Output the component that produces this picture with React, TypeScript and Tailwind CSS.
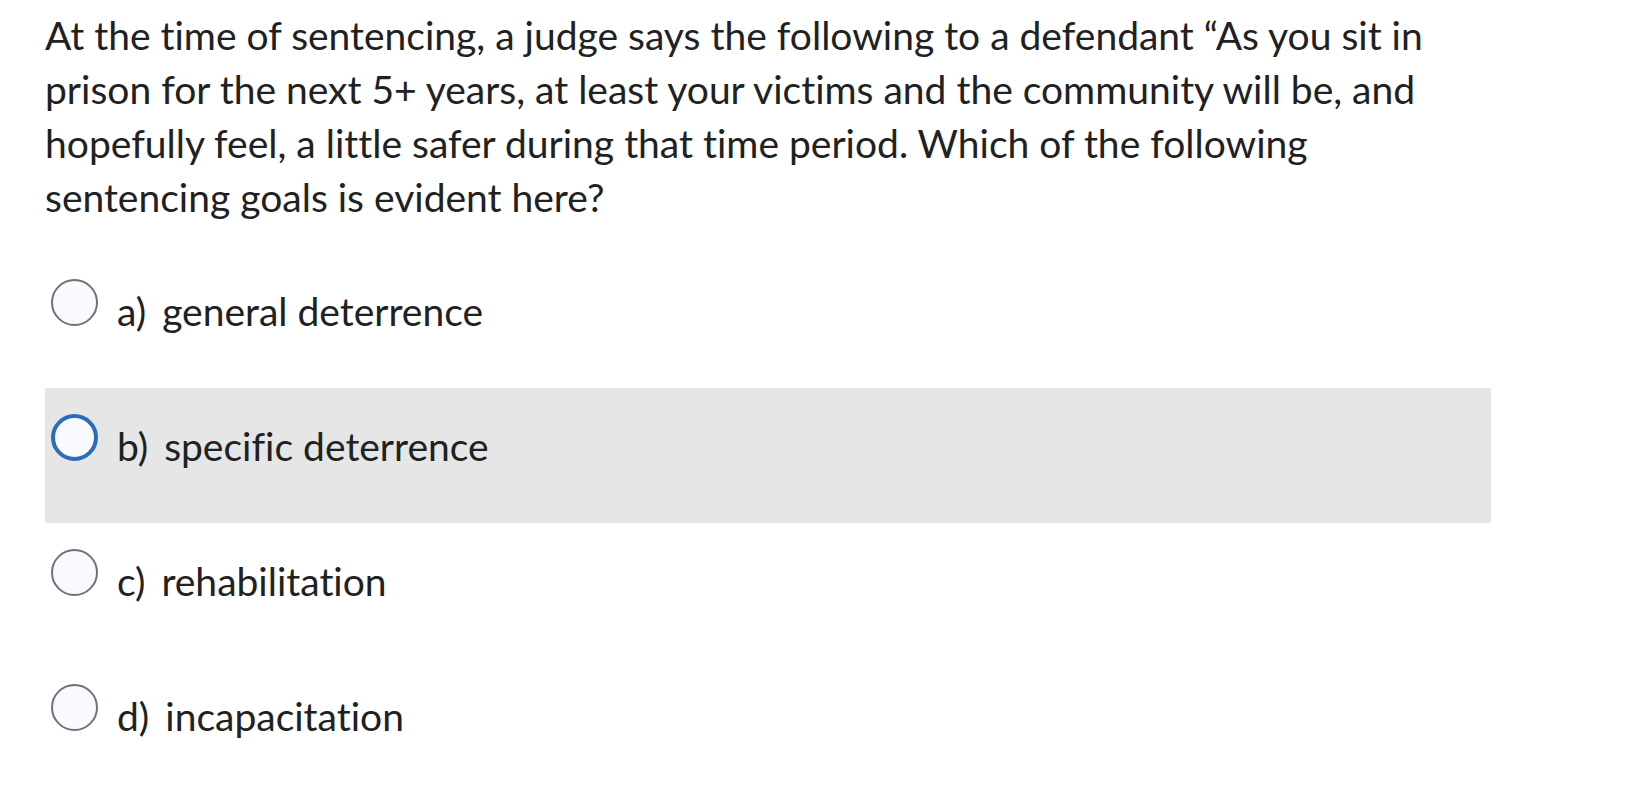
const options = [
  { letter: "a)", text: "general deterrence" },
  { letter: "b)", text: "specific deterrence", focused: true },
  { letter: "c)", text: "rehabilitation" },
  { letter: "d)", text: "incapacitation" },
];

export default function App() {
  return (
    <div className="min-h-screen bg-white text-[#202122] font-['Lato',sans-serif] [font-variant-ligatures:none]">
      <div className="w-[1446px] ml-[45px] pt-[8px]">
        <p className="text-[39px] leading-[54px]">
          At the time of sentencing, a judge says the following to a defendant “As you sit in prison for
          the next 5+ years, at least your victims and the community will be, and hopefully feel, a
          little safer during that time period. Which of the following sentencing goals is evident here?
        </p>

        {/* Answer choices */}
        <div className="mt-[29px]">
          {options.map((o) => (
            <Option key={o.letter} {...o} />
          ))}
        </div>
      </div>
    </div>
  );
}

function Option({ letter, text, focused }: any) {
  return (
    <label
      className={`flex items-start h-[135px] ${focused ? "bg-[#e6e6e6]" : ""}`}
    >
      <span
        className={`mt-[26px] ml-[6px] w-[47px] h-[47px] shrink-0 rounded-full bg-[#f9fafe] ${
          focused ? "border-[4px] border-[#2b6cbf]" : "border-2 border-[#6d7278]"
        }`}
      />
      <span className="mt-[31px] ml-[19px] flex text-[39px] leading-[54px]">
        <span className="mr-[16px]">{letter}</span>
        <span>{text}</span>
      </span>
    </label>
  );
}
